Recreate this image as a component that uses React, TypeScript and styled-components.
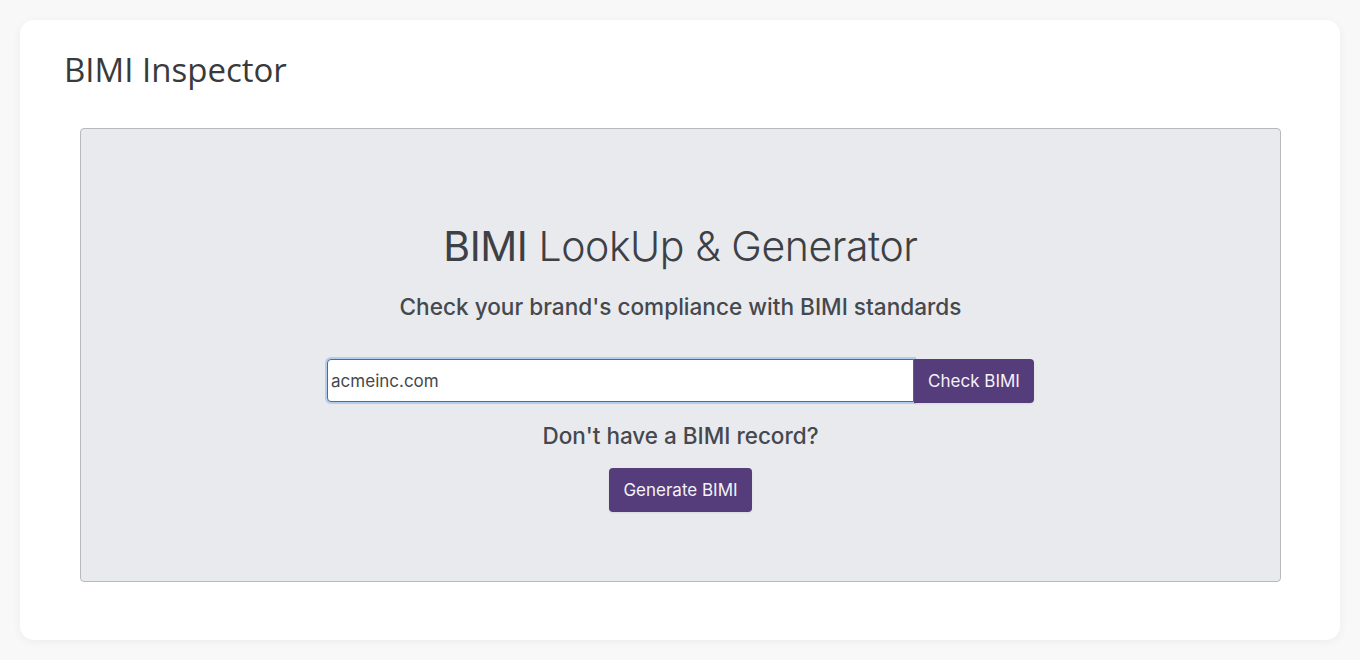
import React from "react";
import styled, { createGlobalStyle } from "styled-components";

const Global = createGlobalStyle`
  html, body { margin: 0; padding: 0; background: #f8f8f9; }
  body { font-family: "Inter", "Noto Sans", sans-serif; }
  * { box-sizing: border-box; }
`;

const Page = styled.div`
  padding: 20px;
  height: 660px;
`;

const Card = styled.div`
  background: #ffffff;
  border-radius: 14px;
  box-shadow: 0 2px 10px rgba(0, 0, 0, 0.05);
  height: 620px;
  padding: 28px 44px 0 44px;
`;

const Title = styled.h1`
  margin: 0;
  font-family: "Open Sans", sans-serif;
  font-weight: 400;
  font-size: 33px;
  line-height: 44px;
  color: #3a3a3a;
`;

const Panel = styled.div`
  margin: 36px 15px 0 16px;
  height: 454px;
  background: #e9eaee;
  border: 1px solid #b8b9bd;
  border-radius: 4px;
  padding-top: 92px;
  display: flex;
  flex-direction: column;
  align-items: center;
`;

const Heading = styled.h2`
  margin: 0;
  font-size: 41px;
  line-height: 50px;
  font-weight: 300;
  color: #3d4045;
  letter-spacing: -0.45px;
`;

const Strong = styled.span`
  font-weight: 400;
`;

const Sub = styled.p`
  margin: 21px 0 0;
  font-size: 22.6px;
  line-height: 30px;
  font-weight: 500;
  color: #45484d;
`;

const Row = styled.div`
  margin-top: 37px;
  display: flex;
  align-items: stretch;
  height: 44px;
`;

const Input = styled.input`
  width: 587px;
  height: 43px;
  border: 1px solid #5d6a72;
  border-radius: 4px 0 0 4px;
  padding: 0 3px;
  font-family: "Inter", sans-serif;
  font-size: 17px;
  color: #45484d;
  background: #fff;
  box-shadow: 0 0 0 2px #b3cdf0;
  outline: none;
  &:focus { outline: none; }
`;

const Button = styled.button<{ $attached?: boolean }>`
  background: #553c7b;
  color: #f4f1f8;
  border: none;
  font-family: "Inter", sans-serif;
  font-size: 17px;
  font-weight: 400;
  padding: 0 14px;
  height: 44px;
  border-radius: ${(p) => (p.$attached ? "0 4px 4px 0" : "4px")};
  box-shadow: 0 1px 2px rgba(0, 0, 0, 0.08);
  cursor: pointer;
`;

const Question = styled.p`
  margin: 19px 0 0;
  font-size: 22.5px;
  line-height: 28px;
  font-weight: 500;
  color: #45484d;
`;

const GenerateWrap = styled.div`
  margin-top: 18px;
`;

export default function App() {
  return (
    <>
      <Global />
      <Page>
        <Card>
          <Title>BIMI Inspector</Title>
          <Panel>
            <Heading>
              <Strong>BIMI</Strong> LookUp &amp; Generator
            </Heading>
            <Sub>Check your brand's compliance with BIMI standards</Sub>
            <Row>
              <Input defaultValue="acmeinc.com" autoFocus />
              <Button $attached>Check BIMI</Button>
            </Row>
            <Question>Don't have a BIMI record?</Question>
            <GenerateWrap>
              <Button>Generate BIMI</Button>
            </GenerateWrap>
          </Panel>
        </Card>
      </Page>
    </>
  );
}
